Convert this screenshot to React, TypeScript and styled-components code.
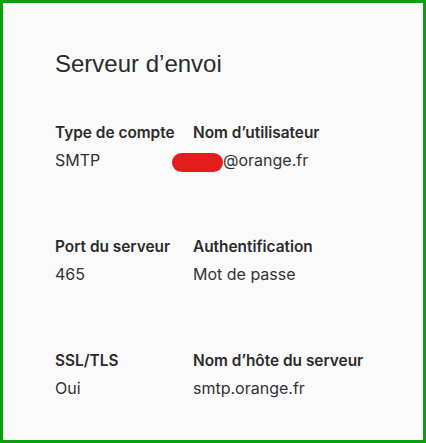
import React from "react";
import styled, { createGlobalStyle } from "styled-components";

const Global = createGlobalStyle`
  html, body { margin: 0; padding: 0; background: #fafafa; }
  * { box-sizing: border-box; }
`;

const Frame = styled.div`
  width: 426px;
  height: 443px;
  border: 3px solid #09a309;
  background: #fafafa;
  padding: 45px 20px 0 52px;
  font-family: Inter, "Noto Sans", sans-serif;
  color: #2b2b2b;
`;

const Title = styled.h1`
  margin: 0;
  font-family: "Liberation Sans", Arial, sans-serif;
  font-weight: 400;
  font-size: 24px;
  line-height: 32px;
  color: #2b2b2b;
`;

const Grid = styled.div`
  margin-top: 43px;
  display: grid;
  grid-template-columns: 138px 1fr;
  row-gap: 67px;
`;

const Field = styled.div`
  display: flex;
  flex-direction: column;
  gap: 7px;
`;

const Label = styled.div`
  font-size: 15.4px;
  font-weight: 600;
  line-height: 20px;
  color: #2b2b2b;
  white-space: nowrap;
`;

const Value = styled.div`
  font-size: 16px;
  font-weight: 400;
  line-height: 20px;
  height: 20px;
  color: #333;
  display: flex;
  align-items: center;
`;

const Redacted = styled.span`
  display: inline-block;
  flex: none;
  width: 51px;
  height: 19px;
  border-radius: 10px;
  background: #e51c1c;
  margin: 3px 0 -2px -21px;
`;

const data: { label: string; value: React.ReactNode }[] = [
  { label: "Type de compte", value: "SMTP" },
  {
    label: "Nom d\u2019utilisateur",
    value: (
      <>
        <Redacted />@orange.fr
      </>
    ),
  },
  { label: "Port du serveur", value: "465" },
  { label: "Authentification", value: "Mot de passe" },
  { label: "SSL/TLS", value: "Oui" },
  { label: "Nom d\u2019h\u00f4te du serveur", value: "smtp.orange.fr" },
];

export default function App() {
  return (
    <>
      <Global />
      <Frame>
        <Title>Serveur d’envoi</Title>
        <Grid>
          {data.map((d) => (
            <Field key={d.label}>
              <Label>{d.label}</Label>
              <Value>{d.value}</Value>
            </Field>
          ))}
        </Grid>
      </Frame>
    </>
  );
}
